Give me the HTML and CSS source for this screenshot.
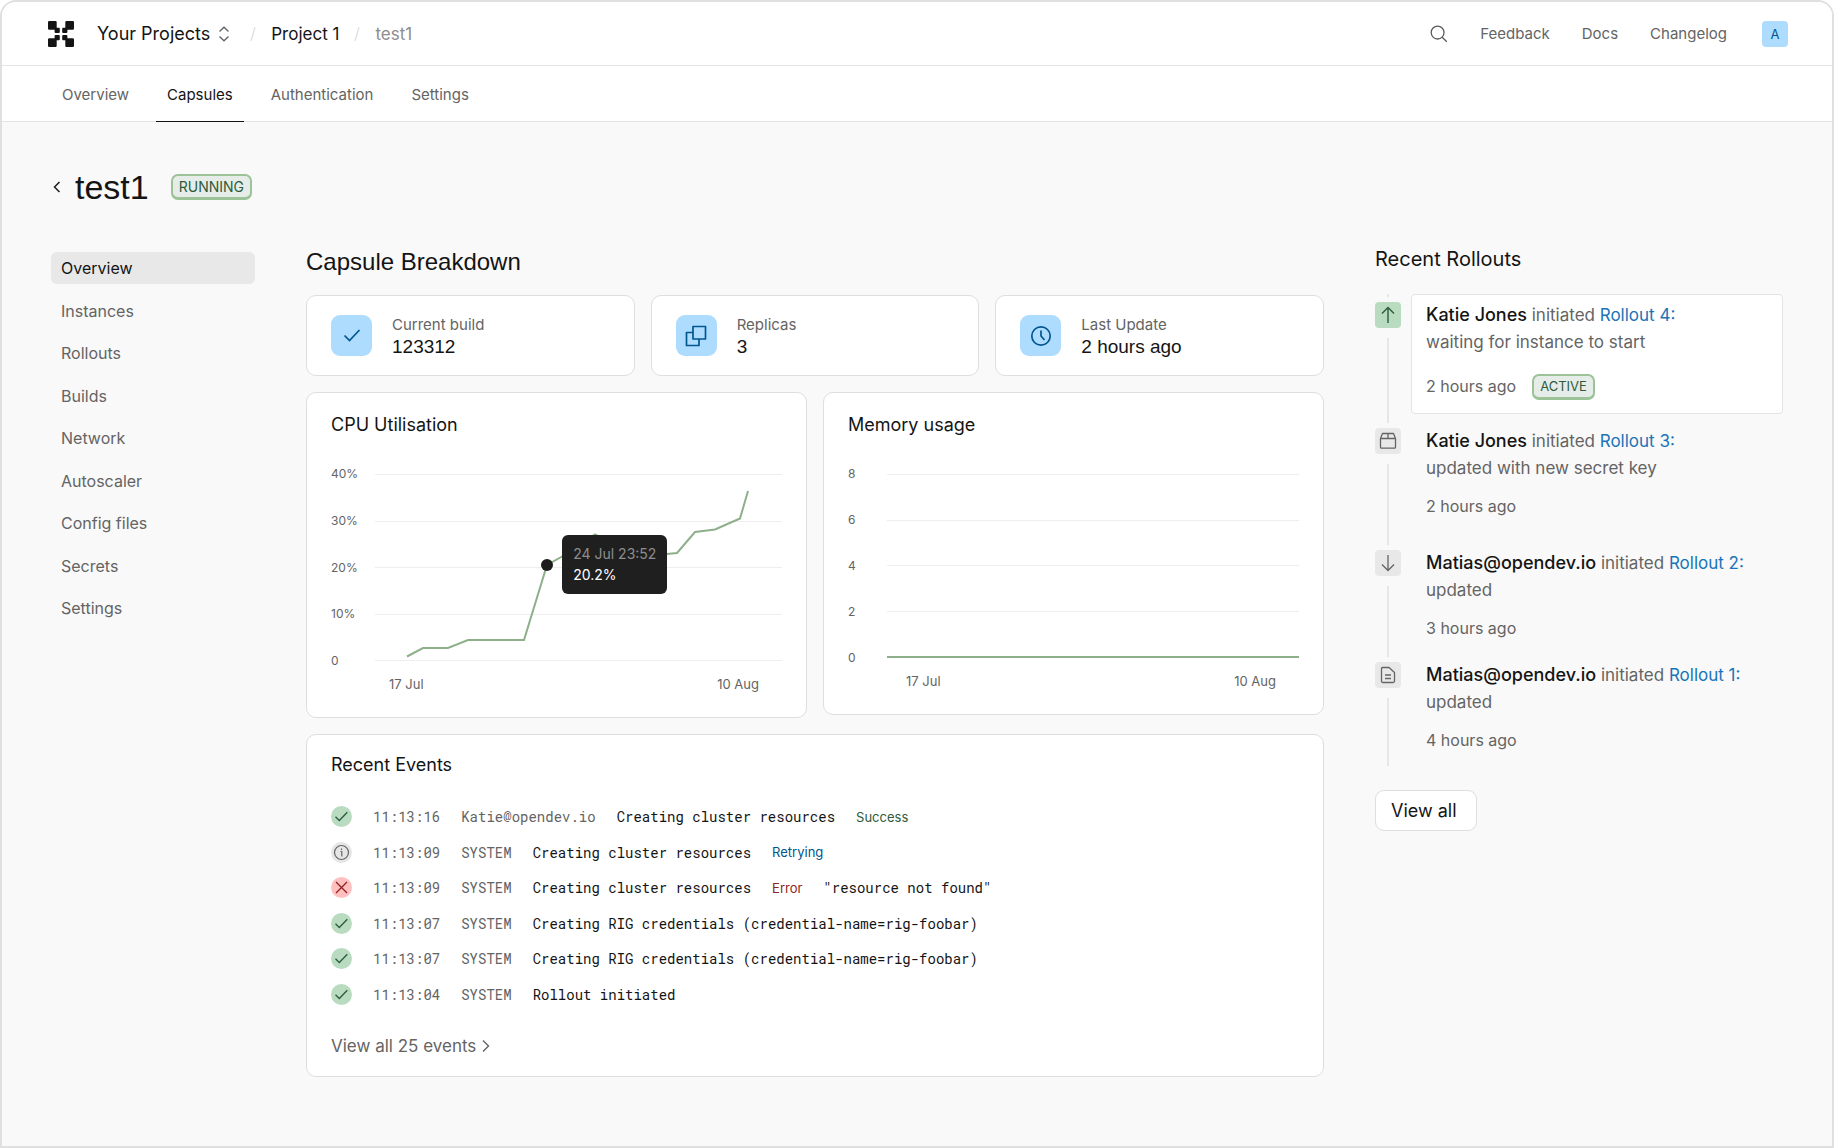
FILE: index.html
```html
<!DOCTYPE html>
<html lang="en">
<head>
  <meta charset="UTF-8">
  <meta name="viewport" content="width=device-width, initial-scale=1.0">
  <title>test1 - Capsules</title>
  <link rel="stylesheet" href="styles.css">
</head>
<body>
  <div class="app">
    <header class="topbar">
      <a class="logo" href="#" aria-label="Home">
        <svg width="26" height="26" viewBox="0 0 26 26" fill="#141414">
          <path id="arm" d="M1.2 0H7.5Q8.7 0 8.7 1.2V6.7H10.8Q11.8 6.7 11.8 7.7V11Q11.8 12 10.8 12H7.6Q6.6 12 6.6 11V8.7H1.2Q0 8.7 0 7.500V1.2Q0 0 1.2 0Z"/>
          <use href="#arm" transform="matrix(-1 0 0 1 26 0)"/>
          <use href="#arm" transform="matrix(1 0 0 -1 0 26)"/>
          <use href="#arm" transform="matrix(-1 0 0 -1 26 26)"/>
        </svg>
      </a>
      <nav class="crumbs" aria-label="Breadcrumb">
        <button class="switcher" type="button">Your Projects
          <svg width="12" height="16" viewBox="0 0 12 16" fill="none" stroke="#646464" stroke-width="1.3"><path d="M1.5 5.5 6 1.2l4.5 4.3M1.5 10.5 6 14.8l4.5-4.3"/></svg>
        </button>
        <svg class="slash" width="6" height="14" viewBox="0 0 6 14" stroke="#dcdcdc" stroke-width="1.2"><path d="M5 0 1 14"/></svg>
        <a class="crumb" href="#">Project 1</a>
        <svg class="slash" width="6" height="14" viewBox="0 0 6 14" stroke="#dcdcdc" stroke-width="1.2"><path d="M5 0 1 14"/></svg>
        <a class="crumb crumb-muted" href="#">test1</a>
      </nav>
      <div class="tools">
        <button class="search" type="button" aria-label="Search">
          <svg width="18" height="18" viewBox="0 0 18 18" fill="none" stroke="#5a5a5a" stroke-width="1.3"><circle cx="7.6" cy="7.6" r="6.4"/><path d="m12.2 12.2 4.6 4.6"/></svg>
        </button>
        <a href="#">Feedback</a>
        <a href="#">Docs</a>
        <a href="#">Changelog</a>
        <button class="avatar" type="button">A</button>
      </div>
    </header>

    <nav class="tabs">
      <a class="tab" href="#">Overview</a>
      <a class="tab active" href="#">Capsules</a>
      <a class="tab" href="#">Authentication</a>
      <a class="tab" href="#">Settings</a>
    </nav>

    <div class="title">
      <a class="back" href="#" aria-label="Back">
        <svg width="8" height="12" viewBox="0 0 8 12" fill="none" stroke="#1c1c1c" stroke-width="1.5"><path d="M6.5 1 1.5 6l5 5"/></svg>
      </a>
      <h1>test1</h1>
      <span class="badge">RUNNING</span>
    </div>

    <div class="layout">
      <nav class="sidebar">
        <a class="active" href="#">Overview</a>
        <a href="#">Instances</a>
        <a href="#">Rollouts</a>
        <a href="#">Builds</a>
        <a href="#">Network</a>
        <a href="#">Autoscaler</a>
        <a href="#">Config files</a>
        <a href="#">Secrets</a>
        <a href="#">Settings</a>
      </nav>

      <main>
        <h2>Capsule Breakdown</h2>

        <div class="stats">
          <div class="card stat">
            <span class="stat-icon">
              <svg width="20" height="20" viewBox="0 0 20 20" fill="none" stroke="#00568f" stroke-width="1.7"><path d="m2.5 9.5 5 5 10-10.500"/></svg>
            </span>
            <div>
              <div class="stat-label">Current build</div>
              <div class="stat-value">123312</div>
            </div>
          </div>
          <div class="card stat">
            <span class="stat-icon">
              <svg width="22" height="22" viewBox="0 0 22 22" fill="none" stroke="#00568f" stroke-width="1.7" stroke-linejoin="round"><path d="M8 1.500h12.500V14H8zM8 7.500H1.500v13H14V14"/></svg>
            </span>
            <div>
              <div class="stat-label">Replicas</div>
              <div class="stat-value">3</div>
            </div>
          </div>
          <div class="card stat">
            <span class="stat-icon">
              <svg width="22" height="22" viewBox="0 0 22 22" fill="none" stroke="#00568f" stroke-width="1.7"><circle cx="11" cy="11" r="9.2"/><path d="M11 5.500V11l3.500 4"/></svg>
            </span>
            <div>
              <div class="stat-label">Last Update</div>
              <div class="stat-value">2 hours ago</div>
            </div>
          </div>
        </div>

        <div class="charts">
          <section class="card chart-card">
            <h3>CPU Utilisation</h3>
            <div class="chart cpu">
              <div class="y-axis"><span>40%</span><span>30%</span><span>20%</span><span>10%</span><span>0</span></div>
              <div class="plot">
                <i></i><i></i><i></i><i></i><i></i>
                <svg class="series" viewBox="0 0 407 187" preserveAspectRatio="none" fill="none" stroke="#8db08a" stroke-width="2">
                  <path vector-effect="non-scaling-stroke" d="M32 182.500 48 174h25l20-8h56l23-75 16-9 32-21.500 40 20.500 32-1 10-1 18-21 20-2.500 25-11 8-27.500"/>
                </svg>
                <span class="dot"></span>
                <div class="tooltip"><span>24 Jul 23:52</span><b>20.2%</b></div>
              </div>
              <div class="x-axis"><span>17 Jul</span><span>10 Aug</span></div>
            </div>
          </section>
          <section class="card chart-card">
            <h3>Memory usage</h3>
            <div class="chart memory">
              <div class="y-axis"><span>8</span><span>6</span><span>4</span><span>2</span><span>0</span></div>
              <div class="plot">
                <i></i><i></i><i></i><i></i><i class="flat"></i>
              </div>
              <div class="x-axis"><span>17 Jul</span><span>10 Aug</span></div>
            </div>
          </section>
        </div>

        <section class="card events">
          <h3>Recent Events</h3>
          <svg class="defs" width="0" height="0">
            <symbol id="ok" viewBox="0 0 21 21"><circle cx="10.5" cy="10.5" r="10.5" fill="#b9dbc0"/><path d="m4.500 10.800 3.800 3.700 8-8.300" fill="none" stroke="#2d5b3c" stroke-width="1.3"/></symbol>
            <symbol id="info" viewBox="0 0 21 21"><circle cx="10.5" cy="10.5" r="10.5" fill="#e6e6e6"/><circle cx="10.5" cy="10.5" r="7" fill="none" stroke="#646464" stroke-width="1.2"/><path d="M9.500 9.500h1.300v5M10.500 6.500v1.400" fill="none" stroke="#646464" stroke-width="1.2"/></symbol>
            <symbol id="fail" viewBox="0 0 21 21"><circle cx="10.5" cy="10.5" r="10.5" fill="#ffc0bf"/><path d="m5 5 11 11M16 5 5 16" fill="none" stroke="#8e1f22" stroke-width="1.3"/></symbol>
          </svg>
          <ul class="event-list">
            <li><svg width="21" height="21"><use href="#ok"/></svg><time>11:13:16</time><span class="who">Katie@opendev.io</span><span>Creating cluster resources</span><span class="status success">Success</span></li>
            <li><svg width="21" height="21"><use href="#info"/></svg><time>11:13:09</time><span class="who">SYSTEM</span><span>Creating cluster resources</span><span class="status retrying">Retrying</span></li>
            <li><svg width="21" height="21"><use href="#fail"/></svg><time>11:13:09</time><span class="who">SYSTEM</span><span>Creating cluster resources</span><span class="status error">Error</span><span>"resource not found"</span></li>
            <li><svg width="21" height="21"><use href="#ok"/></svg><time>11:13:07</time><span class="who">SYSTEM</span><span>Creating RIG credentials (credential-name=rig-foobar)</span></li>
            <li><svg width="21" height="21"><use href="#ok"/></svg><time>11:13:07</time><span class="who">SYSTEM</span><span>Creating RIG credentials (credential-name=rig-foobar)</span></li>
            <li><svg width="21" height="21"><use href="#ok"/></svg><time>11:13:04</time><span class="who">SYSTEM</span><span>Rollout initiated</span></li>
          </ul>
          <a class="more" href="#">View all 25 events
            <svg width="8" height="14" viewBox="0 0 8 14" fill="none" stroke="#646464" stroke-width="1.4"><path d="m1 1.500 5.500 5.500L1 12.500"/></svg>
          </a>
        </section>
      </main>

      <aside class="rollouts">
        <h2>Recent Rollouts</h2>
        <ol class="timeline">
          <li class="active">
            <div class="rail">
              <span class="rail-icon"><svg width="18" height="18" viewBox="0 0 18 18" fill="none" stroke="#2d5b3c" stroke-width="1.4"><path d="M9 17V1.500M3 7.500l6-6 6 6"/></svg></span>
            </div>
            <div class="rollout">
              <p><strong>Katie Jones</strong> initiated <a href="#">Rollout 4:</a><br>waiting for instance to start</p>
              <div class="when">2 hours ago <span class="badge badge-small">ACTIVE</span></div>
            </div>
          </li>
          <li class="long">
            <div class="rail">
              <span class="rail-icon"><svg width="18" height="18" viewBox="0 0 18 18" fill="none" stroke="#646464" stroke-width="1.3" stroke-linejoin="round"><path d="M1.500 6.500v8.700q0 1 1 1h13q1 0 1-1V6.500zM1.500 6.500l2-5h11l2 5M9 1.500v5"/></svg></span>
            </div>
            <div class="rollout">
              <p><strong>Katie Jones</strong> initiated <a href="#">Rollout 3:</a><br>updated with new secret key</p>
              <div class="when">2 hours ago</div>
            </div>
          </li>
          <li>
            <div class="rail">
              <span class="rail-icon"><svg width="18" height="18" viewBox="0 0 18 18" fill="none" stroke="#646464" stroke-width="1.3"><path d="M9 1v15.500M3 10.500l6 6 6-6"/></svg></span>
            </div>
            <div class="rollout">
              <p><strong>Matias@opendev.io</strong> initiated <a href="#">Rollout 2:</a><br>updated</p>
              <div class="when">3 hours ago</div>
            </div>
          </li>
          <li>
            <div class="rail">
              <span class="rail-icon"><svg width="18" height="18" viewBox="0 0 18 18" fill="none" stroke="#646464" stroke-width="1.3" stroke-linejoin="round"><path d="M3.500 1.500h6.500l5.500 5v8.500q0 1.500-1.500 1.500H4q-1.500 0-1.500-1.500V2.500q0-1 1-1zM6 9h6M6 12.500h6"/></svg></span>
            </div>
            <div class="rollout">
              <p><strong>Matias@opendev.io</strong> initiated <a href="#">Rollout 1:</a><br>updated</p>
              <div class="when">4 hours ago</div>
            </div>
          </li>
        </ol>
        <button class="view-all" type="button">View all</button>
      </aside>
    </div>
  </div>
</body>
</html>
```
FILE: styles.css
```css
* {
  box-sizing: border-box;
}
body {
  margin: 0;
  background: #ffffff;
  font-family: Inter, "Liberation Sans", sans-serif;
  font-size: 17px;
  color: #141414;
}
a {
  color: inherit;
  text-decoration: none;
}
button {
  font: inherit;
  color: inherit;
  background: none;
  border: none;
  padding: 0;
  cursor: pointer;
}
h1, h2, h3, p, ul, ol {
  margin: 0;
  padding: 0;
  font-weight: 400;
  list-style: none;
}
svg {
  display: block;
  flex: none;
}
.app {
  min-height: 100vh;
  background: #f9f9f9;
  border: 2px solid #e0e0e0;
  border-radius: 16px 16px 0 0;
  overflow: hidden;
}

/* top bar */
.topbar {
  display: flex;
  align-items: center;
  height: 64px;
  padding: 0 44px 0 46px;
  background: #ffffff;
  border-bottom: 1px solid #e4e4e4;
}
.crumbs {
  display: flex;
  align-items: center;
  gap: 15px;
  margin-left: 23px;
}
.switcher {
  display: flex;
  align-items: center;
  gap: 8px;
  margin-right: 5px;
  font-size: 18px;
}
.crumb-muted {
  color: #8d8d8d;
}
.tools {
  display: flex;
  align-items: center;
  gap: 32px;
  margin-left: auto;
  font-size: 15px;
  color: #646464;
}
.avatar {
  width: 26px;
  height: 26px;
  margin-left: 3px;
  border-radius: 4px;
  background: #addcff;
  color: #00568f;
  font-size: 13px;
}

/* tabs */
.tabs {
  display: flex;
  gap: 16px;
  height: 56px;
  padding: 0 49px;
  background: #ffffff;
  border-bottom: 1px solid #e4e4e4;
  font-size: 15px;
  color: #646464;
}
.tab {
  height: 56px;
  padding: 0 11px;
  line-height: 58px;
  border-bottom: 1px solid transparent;
}
.tab.active {
  color: #141414;
  border-color: #141414;
}

/* title */
.title {
  display: flex;
  align-items: center;
  height: 130px;
  padding: 0 51px;
}
.title h1 {
  margin: 0 22px 0 14px;
  font-family: "Liberation Sans", sans-serif;
  font-size: 34px;
}
.badge {
  padding: 0 6px;
  border: 2px solid #9cc297;
  border-bottom-width: 3px;
  border-radius: 7px;
  background: #e6ede8;
  color: #2d5b3c;
  font-size: 14px;
  line-height: 21px;
}
.badge-small {
  font-size: 13px;
}

.layout {
  display: grid;
  grid-template-columns: 204px minmax(0, 1fr) 408px;
  gap: 51px;
  padding: 0 49px 64px;
}

/* sidebar */
.sidebar {
  display: flex;
  flex-direction: column;
  justify-content: space-between;
  align-self: start;
  height: 372px;
  font-size: 16px;
  color: #646464;
}
.sidebar a {
  padding: 0 10px;
  line-height: 32px;
  border-radius: 6px;
}
.sidebar .active {
  background: #e8e8e8;
  color: #141414;
}

/* main column */
main h2 {
  font-family: "Liberation Sans", sans-serif;
  font-size: 24px;
  line-height: 20px;
  margin-bottom: 23px;
}
.card {
  background: #ffffff;
  border: 1px solid #dedede;
  border-radius: 10px;
}
.stats {
  display: grid;
  grid-template-columns: repeat(3, 1fr);
  gap: 16px;
}
.stat {
  display: flex;
  align-items: center;
  gap: 20px;
  height: 81px;
  padding: 0 24px;
}
.stat-icon {
  display: grid;
  place-items: center;
  width: 41px;
  height: 41px;
  border-radius: 9px;
  background: #addcff;
}
.stat-label {
  font-size: 15px;
  line-height: 22px;
  color: #646464;
}
.stat-value {
  font-family: "Liberation Sans", sans-serif;
  font-size: 19px;
  line-height: 22px;
}
.charts {
  display: grid;
  grid-template-columns: 1fr 1fr;
  align-items: start;
  gap: 16px;
  margin: 16px 0;
}
.chart-card {
  padding: 20px 24px 18px;
}
h3 {
  font-size: 18px;
  line-height: 24px;
}
.chart {
  display: grid;
  margin-top: 37px;
  font-size: 13px;
  line-height: 16px;
  color: #646464;
}
.cpu {
  grid-template: 187px auto / 44px 1fr;
}
.memory {
  grid-template: 184px auto / 39px 1fr;
}
.y-axis {
  display: flex;
  flex-direction: column;
  justify-content: space-between;
  margin: -8px 0;
  font-size: 12px;
}
.plot {
  position: relative;
  display: flex;
  flex-direction: column;
  justify-content: space-between;
}
.plot i {
  height: 1px;
  background: #eeeeee;
}
.plot .flat {
  height: 2px;
  background: #8db08a;
}
.series {
  position: absolute;
  top: 0;
  left: 0;
  width: 100%;
  height: 100%;
}
.dot {
  position: absolute;
  top: 85px;
  left: 42%;
  width: 12px;
  height: 12px;
  margin-left: -5px;
  border-radius: 50%;
  background: #1c1c1c;
}
.tooltip {
  position: absolute;
  top: 61px;
  left: 46%;
  padding: 8px 11px 9px;
  border-radius: 6px;
  background: #1f1f1f;
  color: #ffffff;
  font-size: 14px;
  line-height: 21px;
  white-space: nowrap;
}
.tooltip span {
  display: block;
  color: #8d8d8d;
}
.tooltip b {
  display: block;
  font-weight: 400;
}
.x-axis {
  grid-column: 2;
  display: flex;
  justify-content: space-between;
  padding: 15px 23px 7px 14px;
}
.memory .x-axis {
  padding-left: 19px;
}

/* events */
.events {
  padding: 18px 24px;
}
.event-list {
  display: flex;
  flex-direction: column;
  justify-content: space-between;
  height: 199px;
  margin: 29px 0;
}
.event-list li {
  display: flex;
  align-items: center;
  gap: 21px;
  height: 21px;
  font-family: "Roboto Mono", "Liberation Mono", monospace;
  font-size: 14px;
}
.defs {
  position: absolute;
}
.event-list time,
.who {
  color: #646464;
}
.status {
  font-family: Inter, sans-serif;
  font-size: 13px;
}
.success {
  color: #2d5b3c;
}
.retrying {
  color: #00568f;
}
.error {
  color: #8e1f22;
}
.more {
  display: flex;
  align-items: center;
  gap: 6px;
  line-height: 24px;
  color: #646464;
}

/* rollouts */
.rollouts h2 {
  font-size: 20px;
  line-height: 24px;
  margin: -5px 0 23px;
}
.timeline li {
  display: flex;
  gap: 10px;
}
.rail {
  display: flex;
  flex-direction: column;
  align-items: center;
  width: 26px;
}
.rail::before,
.rail::after {
  content: "";
  width: 2px;
  height: 3px;
  background: #e6e6e6;
}
.rail::after {
  flex: 1;
}
.rail-icon {
  display: grid;
  place-items: center;
  width: 26px;
  height: 26px;
  margin: 5px 0 10px;
  border-radius: 4px;
  background: #e8e8e8;
}
.active .rail-icon {
  background: #b9dbc0;
}
.rollout {
  flex: 1;
  margin-bottom: 4px;
  padding: 7px 14px;
  border: 1px solid transparent;
  border-radius: 4px;
  line-height: 27px;
  color: #646464;
}
.long .rollout {
  margin-bottom: 14px;
}
.active .rollout {
  margin-bottom: 6px;
  padding-bottom: 13px;
  border-color: #e4e4e4;
  background: #ffffff;
}
.rollout p {
  line-height: 27px;
}
.rollout strong {
  font-size: 18px;
  line-height: 24px;
  font-weight: 500;
  color: #141414;
}
.rollout a {
  color: #1a74b8;
}
.when {
  display: flex;
  align-items: center;
  gap: 16px;
  margin-top: 11px;
  font-size: 16px;
}
.active .when {
  margin-top: 17px;
}
.view-all {
  margin-top: 24px;
  height: 41px;
  padding: 0 19px 0 15px;
  border: 1px solid #dedede;
  border-radius: 9px;
  background: #ffffff;
  font-size: 18px;
}
```
